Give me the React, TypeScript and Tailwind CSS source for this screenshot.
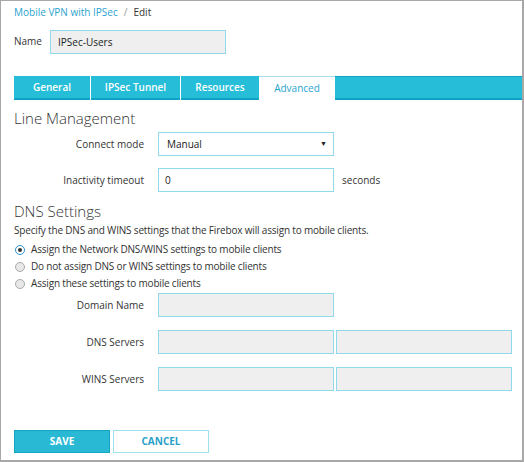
import React from "react";

const font = { fontFamily: '"Open Sans", "Noto Sans", sans-serif' };

function Field({ w = "w-[176px]" }: { w?: string }) {
  return <div className={`${w} h-[24px] bg-[#efefef] border border-[#8fd9ea]`} />;
}

function Radio({ checked }: { checked?: boolean }) {
  return (
    <span
      className={`w-[10px] h-[10px] rounded-full border flex items-center justify-center ${
        checked ? "border-[#2a8fd0] bg-white" : "border-[#a8a8a8] bg-[#e8e8e8]"
      }`}
    >
      {checked && <span className="w-[4px] h-[4px] rounded-full bg-[#333]" />}
    </span>
  );
}

export default function App() {
  return (
    <div
      className="w-[524px] h-[462px] bg-white border-t border-l border-r-2 border-b-2 border-[#a8a8a8] text-[10px] text-[#333] flex flex-col"
      style={font}
    >
      <div className="pl-[13px] pt-[4px] text-[10px] leading-[14px]">
        <span className="text-[#2aa3cf]">Mobile VPN with IPSec</span>
        <span className="text-[#999] mx-[6px]">/</span>
        <span className="text-[#333]">Edit</span>
      </div>
      <div className="flex items-start pl-[13px] mt-[11px]">
        <span className="pt-[4px] w-[36px]">Name</span>
        <div className="w-[176px] h-[24px] bg-[#efefef] border border-[#8fd9ea] flex items-center pl-[7px] text-[10px] text-[#222]">
          IPSec-Users
        </div>
      </div>
      <div className="flex pl-[13px] mt-[22px] h-[24px]">
        <div className="w-[76px] bg-[#25bdd8] border-b-2 border-[#0fa2c4] text-white font-semibold flex items-center justify-center">General</div>
        <div className="w-px bg-white" />
        <div className="w-[89px] bg-[#25bdd8] border-b-2 border-[#0fa2c4] text-white font-semibold flex items-center justify-center">IPSec Tunnel</div>
        <div className="w-px bg-white" />
        <div className="w-[78px] bg-[#25bdd8] border-b-2 border-[#0fa2c4] text-white font-semibold flex items-center justify-center">Resources</div>
        <div className="w-[76px] bg-white border-t border-[#a9dcea] text-[#2aa3cf] flex items-center justify-center">Advanced</div>
        <div className="flex-1 bg-[#25bdd8] border-t border-b-2 border-[#0fa2c4]" />
      </div>
      <div className="pl-[13px] mt-[8px] text-[15px] leading-[20px] font-light text-[#333]">Line Management</div>
      <div className="flex items-center mt-[4px] h-[24px]">
        <span className="w-[143px] text-right">Connect mode</span>
        <div className="ml-[14px] w-[176px] h-[24px] border border-[#8fd9ea] flex items-center justify-between pl-[8px] pr-[6px] text-[#222]">
          <span>Manual</span>
          <span className="text-[7px]">▼</span>
        </div>
      </div>
      <div className="flex items-center mt-[12px] h-[24px]">
        <span className="w-[143px] text-right">Inactivity timeout</span>
        <div className="ml-[14px] w-[176px] h-[24px] border border-[#8fd9ea] flex items-center pl-[6px] text-[#222]">0</div>
        <span className="ml-[8px]">seconds</span>
      </div>
      <div className="pl-[13px] mt-[9px] text-[15px] leading-[20px] font-light">DNS Settings</div>
      <div className="pl-[13px] mt-[2px] leading-[15px] tracking-[-0.18px]">Specify the DNS and WINS settings that the Firebox will assign to mobile clients.</div>
      <div className="pl-[14px] mt-[4px] flex flex-col gap-[2px] tracking-[-0.18px]">
        <div className="flex items-center gap-[6px] h-[15px]"><Radio checked /><span>Assign the Network DNS/WINS settings to mobile clients</span></div>
        <div className="flex items-center gap-[6px] h-[15px]"><Radio /><span>Do not assign DNS or WINS settings to mobile clients</span></div>
        <div className="flex items-center gap-[6px] h-[15px]"><Radio /><span>Assign these settings to mobile clients</span></div>
      </div>
      <div className="flex items-center mt-[2px] h-[24px]">
        <span className="w-[143px] text-right">Domain Name</span>
        <div className="ml-[14px]"><Field /></div>
      </div>
      <div className="flex items-center mt-[13px] h-[24px]">
        <span className="w-[143px] text-right">DNS Servers</span>
        <div className="ml-[14px] flex gap-[2px]"><Field /><Field /></div>
      </div>
      <div className="flex items-center mt-[13px] h-[24px]">
        <span className="w-[143px] text-right">WINS Servers</span>
        <div className="ml-[14px] flex gap-[2px]"><Field /><Field /></div>
      </div>
      <div className="flex pl-[13px] mt-[39px] gap-[3px]">
        <div className="w-[96px] h-[23px] bg-[#2ab9d4] border border-[#15a6c4] text-white font-bold text-[10px] flex items-center justify-center">SAVE</div>
        <div className="w-[96px] h-[23px] bg-white border border-[#9fe0ee] text-[#2a9fcb] font-bold text-[10px] flex items-center justify-center">CANCEL</div>
      </div>
    </div>
  );
}
